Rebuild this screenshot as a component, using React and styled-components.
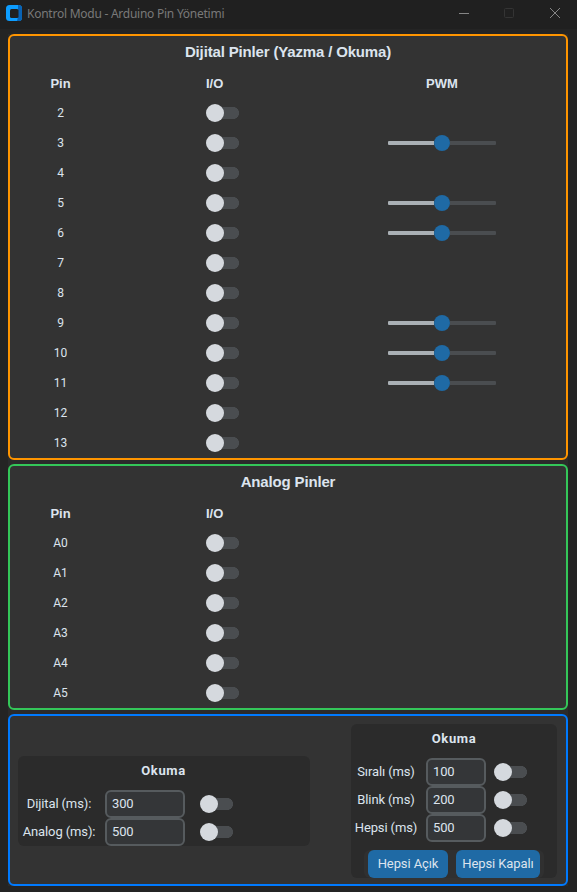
import React from "react";
import styled, { createGlobalStyle } from "styled-components";

const GlobalStyle = createGlobalStyle`
  * { box-sizing: border-box; }
  body { margin: 0; background: #242424; }
`;

const Window = styled.div`
  width: 577px;
  height: 892px;
  display: flex;
  flex-direction: column;
  background: #242424;
  color: #dce4ee;
  font: 13px/20px Roboto, sans-serif;
  overflow: hidden;
`;

const TitleBar = styled.header`
  height: 29px;
  flex: none;
  display: flex;
  align-items: center;
  padding: 0 0 3px 6px;
  background: #202020;
  color: #797979;
`;

const Logo = styled.svg`
  width: 16px;
  height: 16px;
  margin-right: 5px;
`;

const WindowTitle = styled.span`
  font: 12px/16px "Noto Sans", sans-serif;
  letter-spacing: -0.25px;
  white-space: nowrap;
  flex: 1;
  padding-top: 2px;
`;

const WindowControls = styled.svg`
  width: 120px;
  height: 26px;
  margin-right: 6px;
`;

const Content = styled.main`
  width: 560px;
  height: 852px;
  margin: 5px 0 0 8px;
  display: flex;
  flex-direction: column;
  gap: 4px;
  background: #2b2b2b;
`;

const Panel = styled.section`
  height: ${(p) => p.$height}px;
  flex: none;
  border: 2px solid ${(p) => p.$color};
  border-radius: 6px;
  background: #333333;
`;

const PanelTitle = styled.h2`
  margin: 0;
  height: 32px;
  padding: 2px 0 0 0;
  font: bold 15px/28px "Liberation Sans", Arial, sans-serif;
  letter-spacing: -0.16px;
  text-align: center;
`;

const PinRow = styled.div`
  display: grid;
  grid-template-columns: 101px 193px 1fr;
  height: 30px;
  align-items: center;
  font-size: 12px;
`;

const HeaderRow = styled(PinRow)`
  font: bold 13px/30px "Liberation Sans", Arial, sans-serif;
  padding-top: 1px;
`;

const Cell = styled.span`
  text-align: center;
`;

const IoCell = styled.div`
  padding-left: 95px;
  display: flex;
`;

const PwmCell = styled.div`
  width: 108px;
  margin-left: 84px;
  text-align: center;
`;

const Toggle = styled.div`
  width: 33px;
  height: 18px;
  flex: none;
  display: flex;
  align-items: center;
  background: linear-gradient(#4a4d50, #4a4d50) 6px 3px / 21px 12px no-repeat,
    radial-gradient(circle at 27px 9px, #4a4d50 5.7px, transparent 6.3px);
  &::before {
    content: "";
    width: 18px;
    height: 18px;
    border-radius: 50%;
    background: #d5d9de;
  }
`;

const SliderTrack = styled.div`
  height: 16px;
  display: flex;
  align-items: center;
  &::before, &::after {
    content: "";
    height: 4px;
    flex: 1;
    background: #aab0b5;
    border-radius: 1px 0 0 1px;
  }
  &::after {
    background: #4a4d50;
    border-radius: 0 1px 1px 0;
  }
`;

const SliderKnob = styled.span`
  width: 16px;
  height: 16px;
  border-radius: 50%;
  background: #1f6aa5;
`;

const SettingsPanel = styled(Panel)`
  display: flex;
  align-items: flex-start;
  justify-content: space-between;
  padding: 8px 9px 0 8px;
`;

const Card = styled.div`
  width: ${(p) => p.$width}px;
  height: ${(p) => p.$height}px;
  margin-top: ${(p) => p.$top || 0}px;
  border-radius: 6px;
  background: #2b2b2b;
`;

const CardTitle = styled.h3`
  margin: 0;
  height: 34px;
  padding-top: 1px;
  font: bold 13px/28px Roboto, sans-serif;
  letter-spacing: 0.65px;
  padding-right: ${(p) => p.$shift || 0}px;
  text-align: center;
`;

const FieldRow = styled.div`
  display: grid;
  grid-template-columns: ${(p) => p.$columns};
  height: 28px;
  align-items: center;
`;

const FieldLabel = styled.label`
  text-align: center;
  white-space: nowrap;
  letter-spacing: -0.12px;
  padding-right: ${(p) => p.$inset || 0}px;
`;

const Field = styled.input`
  width: 100%;
  height: 28px;
  border: 2px solid #565b5e;
  border-radius: 6px;
  padding: 0 5px 1px;
  background: #343638;
  color: #dce4ee;
  font: 13px Roboto, sans-serif;
  letter-spacing: -0.15px;
`;

const ToggleCell = styled.div`
  padding-left: ${(p) => p.$inset}px;
`;

const ButtonRow = styled.div`
  width: 180px;
  height: 28px;
  margin: 8px 0 0 13px;
  padding: 0 4px;
  display: flex;
  gap: 8px;
  border-radius: 6px;
  background: #303030;
`;

const Button = styled.button`
  width: ${(p) => p.$width}px;
  border: 0;
  border-radius: 6px;
  padding: 0;
  background: #1f6aa5;
  color: #dce4ee;
  font: 13px/28px Roboto, sans-serif;
  letter-spacing: -0.1px;
  white-space: nowrap;
`;

const digitalPins = Array.from({ length: 12 }, (_, i) => i + 2);
const pwmPins = [3, 5, 6, 9, 10, 11];
const analogPins = ["A0", "A1", "A2", "A3", "A4", "A5"];

function Pin({ name, pwm }) {
  return (
    <PinRow>
      <Cell>{name}</Cell>
      <IoCell><Toggle /></IoCell>
      {pwm && (
        <PwmCell>
          <SliderTrack><SliderKnob /></SliderTrack>
        </PwmCell>
      )}
    </PinRow>
  );
}

function Setting({ label, value, columns, labelInset, toggleInset }) {
  return (
    <FieldRow $columns={columns}>
      <FieldLabel $inset={labelInset}>{label}</FieldLabel>
      <Field defaultValue={value} />
      <ToggleCell $inset={toggleInset}><Toggle /></ToggleCell>
    </FieldRow>
  );
}

const leftLayout = { columns: "87px 80px 1fr", labelInset: 5, toggleInset: 15 };
const rightLayout = { columns: "75px 60px 1fr", labelInset: 5, toggleInset: 8 };

export default function App() {
  return (
    <Window>
      <GlobalStyle />
      <TitleBar>
        <Logo viewBox="0 0 16 16">
          <rect width="16" height="16" rx="3.5" fill="#0d9dff" />
          <path d="M12 0h.5A3.5 3.5 0 0 1 16 3.5v9a3.5 3.5 0 0 1-3.5 3.5H11l1-4z" fill="#0963b5" />
          <rect x="4" y="4" width="8.5" height="9" rx="1.5" fill="#202020" />
        </Logo>
        <WindowTitle>Kontrol Modu - Arduino Pin Yönetimi</WindowTitle>
        <WindowControls viewBox="0 0 120 26" fill="none">
          <path d="M8 13.5h10" stroke="#858585" />
          <rect x="53.5" y="8.5" width="9" height="9" rx="1" stroke="#343434" />
          <path d="m99 8 10 10m0-10L99 18" stroke="#858585" />
        </WindowControls>
      </TitleBar>
      <Content>
        <Panel $height={426} $color="#ff9500">
          <PanelTitle>Dijital Pinler (Yazma / Okuma)</PanelTitle>
          <HeaderRow>
            <Cell>Pin</Cell>
            <IoCell>I/O</IoCell>
            <PwmCell>PWM</PwmCell>
          </HeaderRow>
          {digitalPins.map((n) => <Pin key={n} name={n} pwm={pwmPins.includes(n)} />)}
        </Panel>
        <Panel $height={246} $color="#34c759">
          <PanelTitle>Analog Pinler</PanelTitle>
          <HeaderRow>
            <Cell>Pin</Cell>
            <IoCell>I/O</IoCell>
          </HeaderRow>
          {analogPins.map((n) => <Pin key={n} name={n} />)}
        </Panel>
        <SettingsPanel $height={172} $color="#007aff">
          <Card $width={292} $height={90} $top={32}>
            <CardTitle $shift={1}>Okuma</CardTitle>
            <Setting label="Dijital (ms):" value="300" {...leftLayout} />
            <Setting label="Analog (ms):" value="500" {...leftLayout} />
          </Card>
          <Card $width={206} $height={154}>
            <CardTitle>Okuma</CardTitle>
            <Setting label="Sıralı (ms)" value="100" {...rightLayout} />
            <Setting label="Blink (ms)" value="200" {...rightLayout} />
            <Setting label="Hepsi (ms)" value="500" {...rightLayout} />
            <ButtonRow>
              <Button $width={80}>Hepsi Açık</Button>
              <Button $width={84}>Hepsi Kapalı</Button>
            </ButtonRow>
          </Card>
        </SettingsPanel>
      </Content>
    </Window>
  );
}
